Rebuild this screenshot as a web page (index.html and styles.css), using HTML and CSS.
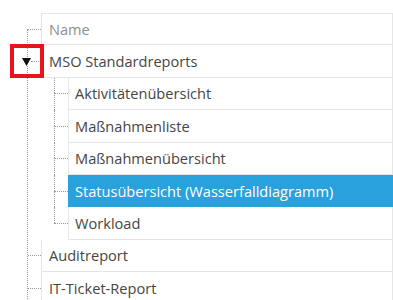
FILE: index.html
```html
<!DOCTYPE html>
<html lang="de">
<head>
    <meta charset="UTF-8">
    <meta name="viewport" content="width=device-width, initial-scale=1.0">
    <title>Berichte</title>
    <link rel="stylesheet" href="styles.css">
</head>
<body>
    <div class="report-tree">
        <div class="row head">
            <span class="elbow root"><span class="up"></span><span class="down"></span></span>
            <div class="cell muted">Name</div>
        </div>

        <ul class="tree">
            <li class="node open">
                <div class="row">
                    <span class="hline toggle">
                        <svg class="caret" width="9" height="8" viewBox="0 0 9 8"><polygon points="0,0 9,0 4.5,8" fill="#111"/></svg>
                        <span class="dots"></span>
                    </span>
                    <div class="cell">MSO Standardreports</div>
                </div>
                <span class="marker"></span>

                <ul class="children">
                    <li class="row">
                        <span class="elbow"><span class="up"></span><span class="down"></span></span>
                        <div class="cell">Aktivitätenübersicht</div>
                    </li>
                    <li class="row">
                        <span class="elbow"><span class="up"></span><span class="down"></span></span>
                        <div class="cell">Maßnahmenliste</div>
                    </li>
                    <li class="row">
                        <span class="elbow"><span class="up"></span><span class="down"></span></span>
                        <div class="cell">Maßnahmenübersicht</div>
                    </li>
                    <li class="row">
                        <span class="elbow"><span class="up"></span><span class="down"></span></span>
                        <div class="cell selected">Statusübersicht (Wasserfalldiagramm)</div>
                    </li>
                    <li class="row last">
                        <span class="elbow"><span class="up"></span><span class="down"></span></span>
                        <div class="cell">Workload</div>
                    </li>
                </ul>
            </li>
            <li class="node">
                <div class="row">
                    <span class="hline"><span class="dots"></span></span>
                    <div class="cell">Auditreport</div>
                </div>
            </li>
            <li class="node">
                <div class="row">
                    <span class="hline"><span class="dots"></span></span>
                    <div class="cell">IT-Ticket-Report</div>
                </div>
            </li>
        </ul>
    </div>
</body>
</html>
```

FILE: styles.css
```css
body {
    margin: 0;
    background-color: #fff;
    font-family: "Open Sans", "Noto Sans", sans-serif;
    font-size: 14.6px;
    color: #454545;
}
.report-tree {
    padding-top: 13px;
    padding-left: 27px;
}
ul {
    list-style: none;
    margin: 0;
    padding: 0;
}
.row {
    display: flex;
    height: 32.4px;
}
.cell {
    flex: 1;
    box-sizing: border-box;
    display: flex;
    align-items: center;
    padding-left: 7px;
    border: 1px solid #e6e6e6;
    border-top: none;
    white-space: nowrap;
}
.head .cell {
    border-top: 1px solid #e6e6e6;
}
.muted {
    color: #8e8e8e;
}
.selected {
    background-color: #29a1dc;
    border-color: #29a1dc;
    color: #fff;
}

/* connector lines */
.elbow {
    display: flex;
    flex-direction: column;
    width: 14px;
}
.elbow .up, .elbow .down {
    flex: 1;
    border-left: 1px dotted #999;
}
.elbow .down {
    border-top: 1px dotted #999;
}
.elbow.root .up {
    border-left: none;
}
.last .elbow .down {
    border-left: none;
}
.tree {
    border-left: 1px dotted #999;
}
.hline {
    display: flex;
    align-items: center;
    width: 13px;
}
.hline .dots {
    flex: 1;
    border-top: 1px dotted #999;
}
.toggle .caret {
    margin-left: -6px;
    background: #fff;
}
.children {
    margin-left: 26px;
}
.children .cell {
    padding-left: 6px;
}

.node {
    position: relative;
}
.marker {
    position: absolute;
    left: -18px;
    top: -1px;
    width: 34px;
    height: 34px;
    box-sizing: border-box;
    border: 4px solid #e8141c;
}
```
